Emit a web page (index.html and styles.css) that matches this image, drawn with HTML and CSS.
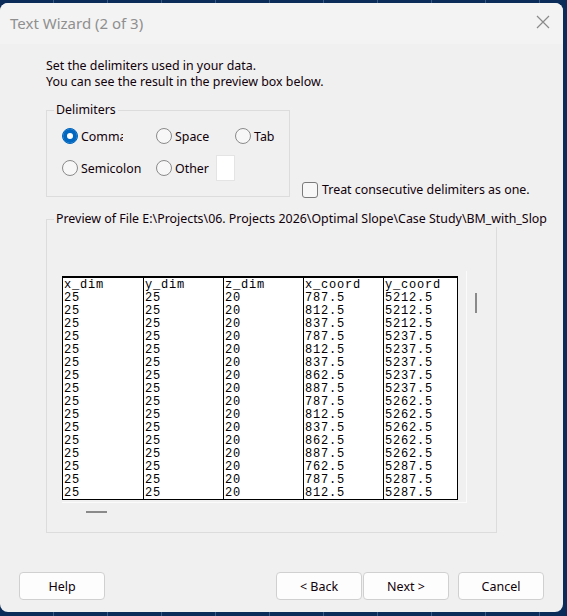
FILE: index.html
```html
<!DOCTYPE html>
<html lang="en">
<head>
    <meta charset="UTF-8">
    <title>Text Wizard (2 of 3)</title>
    <link rel="stylesheet" href="styles.css">
</head>
<body>
    <div class="dialog">
        <div class="title-bar">
            <span class="title">Text Wizard (2 of 3)</span>
            <svg class="close" width="14" height="14" viewBox="0 0 14 14">
                <path d="M1 1 L13 13 M13 1 L1 13" stroke="#8a8a8a" stroke-width="1.2" fill="none"/>
            </svg>
        </div>
        <div class="content">
            <p class="intro">Set the delimiters used in your data.<br>You can see the result in the preview box below.</p>

            <div class="options-row">
                <div class="group delimiters">
                    <span class="group-label">Delimiters</span>
                    <div class="radio-grid">
                        <label class="radio checked"><span class="dot"></span><span class="clip">Comma</span></label>
                        <label class="radio"><span class="dot"></span>Space</label>
                        <label class="radio"><span class="dot"></span>Tab</label>
                        <label class="radio"><span class="dot"></span>Semicolon</label>
                        <label class="radio"><span class="dot"></span>Other <span class="other-box"></span></label>
                    </div>
                </div>
                <label class="check"><span class="box"></span>Treat consecutive delimiters as one.</label>
            </div>

            <div class="group preview">
                <span class="group-label wide">Preview of File E:\Projects\06. Projects 2026\Optimal Slope\Case Study\BM_with_Slope</span>
                <div class="preview-area">
                    <div class="frame">
                        <table class="grid" id="grid">
                            <colgroup>
                                <col class="c1"><col class="c2"><col class="c2"><col class="c2"><col class="c5">
                            </colgroup>
                            <tr><td>x_dim</td><td>y_dim</td><td>z_dim</td><td>x_coord</td><td class="last">y_coord</td></tr>
                        </table>
                    </div>
                    <div class="vthumb"></div>
                </div>
                <div class="hthumb"></div>
            </div>

            <div class="buttons">
                <button class="btn">Help</button>
                <span class="spacer"></span>
                <button class="btn">&lt; Back</button>
                <button class="btn next">Next &gt;</button>
                <button class="btn cancel">Cancel</button>
            </div>
        </div>
    </div>

    <script>
        var rows = [
            ['787.5', '5212.5'], ['812.5', '5212.5'], ['837.5', '5212.5'],
            ['787.5', '5237.5'], ['812.5', '5237.5'], ['837.5', '5237.5'],
            ['862.5', '5237.5'], ['887.5', '5237.5'], ['787.5', '5262.5'],
            ['812.5', '5262.5'], ['837.5', '5262.5'], ['862.5', '5262.5'],
            ['887.5', '5262.5'], ['762.5', '5287.5'], ['787.5', '5287.5'],
            ['812.5', '5287.5']
        ];
        var grid = document.getElementById('grid');
        rows.forEach(function (r) {
            var tr = document.createElement('tr');
            ['25', '25', '20', r[0], r[1]].forEach(function (v, i) {
                var td = document.createElement('td');
                td.innerText = v;
                if (i === 4) td.classList.add('last');
                tr.appendChild(td);
            });
            grid.appendChild(tr);
        });
    </script>
</body>
</html>
```

FILE: styles.css
```css
body {
    margin: 0;
    padding: 0;
    width: 567px;
    height: 616px;
    overflow: hidden;
    background-color: #0b2b59;
    background-image: repeating-linear-gradient(90deg, transparent 0, transparent 53px, #3a5a86 53px, #3a5a86 54px);
    font-family: "Noto Sans", "Open Sans", sans-serif;
}
.dialog {
    margin-top: 3px;
    width: 563px;
    height: 609px;
    background: #f0f0f0;
    border-radius: 8px;
    overflow: hidden;
    display: flex;
    flex-direction: column;
}
.title-bar {
    height: 41px;
    background: #f3f3f3;
    display: flex;
    align-items: center;
    justify-content: space-between;
    padding: 0 13px 0 10px;
    flex-shrink: 0;
}
.title {
    font-size: 15px;
    color: #8f8f8f;
    margin-top: -2px;
}
.close {
    margin-top: -3px;
}
.content {
    flex: 1;
    display: flex;
    flex-direction: column;
    padding: 14px 19px 12px 46px;
    font-size: 12.4px;
    color: #10000a;
}
.intro {
    margin: 0;
    line-height: 16px;
}
.options-row {
    display: flex;
    align-items: flex-end;
    margin-top: 20px;
}
.group {
    position: relative;
    border: 1px solid #dcdcdc;
}
.group-label {
    position: absolute;
    top: -9px;
    left: 7px;
    background: #f0f0f0;
    padding: 0 2px;
    line-height: 16px;
    white-space: nowrap;
}
.group-label.wide {
    width: 489px;
    overflow: hidden;
}
.delimiters {
    width: 242px;
    height: 85px;
}
.radio-grid {
    display: grid;
    grid-template-columns: 94px 79px auto;
    grid-auto-rows: 32px;
    padding: 9px 0 0 15px;
}
.radio {
    display: flex;
    align-items: center;
    white-space: nowrap;
}
.radio .dot {
    width: 14px;
    height: 14px;
    border: 1px solid #8a8a8a;
    border-radius: 50%;
    background: #f7f7f7;
    margin-right: 3px;
    flex-shrink: 0;
}
.radio.checked .dot {
    border-color: #0067c0;
    background: #0067c0;
    box-shadow: inset 0 0 0 4px #0067c0, inset 0 0 0 8px #ffffff;
}
.clip {
    width: 42px;
    overflow: hidden;
}
.other-box {
    display: inline-block;
    width: 18px;
    height: 24px;
    background: #ffffff;
    border: 1px solid #e4e4e4;
    margin-left: 7px;
}
.check {
    display: flex;
    align-items: center;
    margin-left: 12px;
    margin-bottom: -1px;
    white-space: nowrap;
}
.check .box {
    width: 14px;
    height: 14px;
    border: 1px solid #7a7a7a;
    border-radius: 3px;
    background: #f7f7f7;
    margin-right: 4px;
}
.preview {
    margin-top: 22px;
    width: 449px;
    height: 312px;
}
.preview-area {
    display: flex;
    align-items: flex-start;
    margin: 51px 0 0 15px;
}
.frame {
    width: 404px;
    height: 226px;
    padding-top: 5px;
    border-right: 1px solid #fbfbfb;
    border-bottom: 1px solid #fbfbfb;
}
.vthumb {
    width: 2px;
    height: 20px;
    background: #8a8a8a;
    margin: 22px 0 0 8px;
}
.hthumb {
    width: 21px;
    height: 2px;
    background: #8a8a8a;
    margin: 8px 0 0 39px;
}
.grid {
    border-collapse: collapse;
    table-layout: fixed;
    width: 395px;
    background: #ffffff;
    border-top: 2px solid #000;
    border-bottom: 1px solid #000;
    font-family: "Liberation Mono", monospace;
    font-size: 12px;
    color: #000;
}
.grid col.c1 {
    width: 81px;
}
.grid col.c2 {
    width: 80px;
}
.grid col.c5 {
    width: 74px;
}
.grid td {
    height: 13px;
    line-height: 12px;
    padding: 0 0 0 1px;
    border-left: 1px solid #000;
    letter-spacing: 0.8px;
    white-space: nowrap;
    overflow: hidden;
}
.grid td.last {
    border-right: 1px solid #000;
}
.buttons {
    margin-top: auto;
    display: flex;
    margin-left: -27px;
}
.spacer {
    flex: 1;
}
.btn {
    width: 86px;
    height: 28px;
    background: #fdfdfd;
    border: 1px solid #d0d0d0;
    border-radius: 4px;
    font-family: "Noto Sans", "Open Sans", sans-serif;
    font-size: 12.5px;
    color: #10000a;
    padding: 0;
}
.next {
    margin-left: 1px;
}
.cancel {
    margin-left: 9px;
}
```
